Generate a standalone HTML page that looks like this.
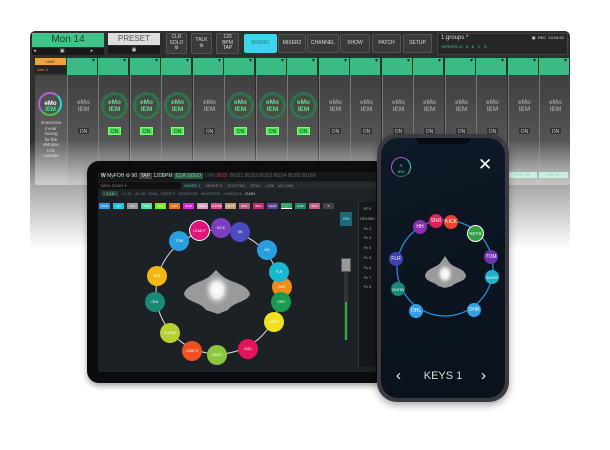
<!DOCTYPE html>
<html><head><meta charset="utf-8"><style>
*{margin:0;padding:0;box-sizing:border-box}
body{width:610px;height:450px;background:#fff;position:relative;overflow:hidden;font-family:"Liberation Sans",sans-serif}
.a{position:absolute}
.btn{position:absolute;background:#3a3a3a;border:1px solid #555;border-radius:2px;color:#ddd;font-size:5px;text-align:center;display:flex;align-items:center;justify-content:center;line-height:1.1}
.st{position:absolute;top:75px;width:31px;height:110px;background:linear-gradient(#3f3f3f,#555 60%,#777);border-left:1px solid #777}
.dd{position:absolute;top:58px;width:30px;height:17px;background:#3cb985;border-left:1px solid #2c6}
.dd:after{content:"▾";position:absolute;right:2px;top:-1px;font-size:6px;color:#123}
.emo{position:absolute;left:0;width:31px;top:24px;text-align:center;font-size:6.5px;line-height:7px;color:#9a9a9a;font-weight:bold}
.emo.g{color:#5fe07a}
.ring{position:absolute;left:4px;top:19px;width:23px;height:23px;border-radius:50%;border:2px solid #2a6a3a;box-shadow:0 0 3px #2d8}
.on{position:absolute;left:9px;top:52px;width:13px;height:8px;background:#333;color:#ccc;font-size:5px;text-align:center;line-height:8px;border:1px solid #555}
.on.g{background:#4ee05a;color:#143;border-color:#7f7}
.b{position:absolute;border-radius:50%;color:#fff;font-size:3.5px;display:flex;align-items:center;justify-content:center}
.c{position:absolute;top:203px;height:6px;width:11px;font-size:3px;color:#fff;text-align:center;line-height:6px}
</style></head><body>
<!-- console -->
<div class="a" style="left:30px;top:31px;width:540px;height:220px;background:#2e2e2e;border-radius:5px 5px 0 0"></div>
<div class="a" style="left:32px;top:33px;width:72px;height:14px;background:#3fc58a;color:#1c3a2c;font-size:10px;text-align:center;line-height:14px">Mon 14</div>
<div class="a" style="left:32px;top:48px;width:72px;height:7px;background:#1a1a1a;color:#ccc;font-size:5px;line-height:7px">&nbsp;◂<span style="margin-left:24px">▣</span><span style="margin-left:26px">▸</span></div>
<div class="a" style="left:108px;top:33px;width:52px;height:12px;background:#ddd;color:#555;font-size:8px;text-align:center;line-height:12px">PRESET</div>
<div class="a" style="left:108px;top:46px;width:52px;height:8px;background:#1a1a1a;color:#ccc;font-size:5px;text-align:center;line-height:8px">▣</div>
<div class="btn" style="left:166px;top:33px;width:21px;height:21px">CLR<br>SOLO<br>⚙</div>
<div class="btn" style="left:191px;top:33px;width:21px;height:21px">TALK<br>⚙</div>
<div class="btn" style="left:216px;top:33px;width:23px;height:21px">120<br>BPM<br>TAP</div>
<div class="btn" style="left:244px;top:34px;width:33px;height:19px;background:#3ed4ec;color:#1a7a8a;border-color:#3ed4ec">MIXER1</div>
<div class="btn" style="left:278px;top:34px;width:28px;height:19px">MIXER2</div>
<div class="btn" style="left:307px;top:34px;width:32px;height:19px">CHANNEL</div>
<div class="btn" style="left:340px;top:34px;width:30px;height:19px">SHOW</div>
<div class="btn" style="left:372px;top:34px;width:29px;height:19px">PATCH</div>
<div class="btn" style="left:403px;top:34px;width:29px;height:19px">SETUP</div>
<div class="a" style="left:437px;top:33px;width:131px;height:22px;background:#262626;border:1px solid #444;color:#ddd;font-size:6px;padding:1px 3px">1:groups *<span style="float:right;font-size:4px">▣ &nbsp;REC &nbsp;14:34:52</span><div style="color:#3c9;font-size:4px;margin-top:3px">SERVER IO &nbsp; A &nbsp; B &nbsp; C &nbsp; D</div></div>
<div class="a" style="left:35px;top:58px;width:31px;height:7px;background:#f0a040;color:#333;font-size:4px;text-align:center;line-height:7px">LINK</div>
<div class="a" style="left:35px;top:66px;width:31px;height:7px;background:#222;color:#f0a040;font-size:4px;line-height:7px;padding-left:2px">Link 3</div>
<div class="a" style="left:35px;top:75px;width:32px;height:110px;background:linear-gradient(#444,#666 70%,#888)"></div>
<div class="a" style="left:38px;top:92px;width:24px;height:24px;border-radius:50%;border:2px solid #a6c;border-right-color:#2dc;border-bottom-color:#4c4"></div>
<div class="a" style="left:37px;top:101px;width:27px;text-align:center;font-size:6px;color:#fff;font-weight:bold;line-height:6px">eMo<br><span style="color:#3e8">IEM</span></div>
<div class="a" style="left:36px;top:120px;width:30px;text-align:center;font-size:4.5px;color:#ddd;line-height:5.5px">Immersive<br>in-ear<br>mixing<br>for the<br>eMotion<br>LV1<br>console</div>

<div class="dd" style="left:67px"></div><div class="st" style="left:67px"><div class="emo">eMo<br>IEM</div><div class="on">ON</div></div>
<div class="dd" style="left:98px"></div><div class="st" style="left:98px"><div class="ring"></div><div class="emo g">eMo<br>IEM</div><div class="on g">ON</div></div>
<div class="dd" style="left:130px"></div><div class="st" style="left:130px"><div class="ring"></div><div class="emo g">eMo<br>IEM</div><div class="on g">ON</div></div>
<div class="dd" style="left:161px"></div><div class="st" style="left:161px"><div class="ring"></div><div class="emo g">eMo<br>IEM</div><div class="on g">ON</div></div>
<div class="dd" style="left:193px"></div><div class="st" style="left:193px"><div class="emo">eMo<br>IEM</div><div class="on">ON</div></div>
<div class="dd" style="left:224px"></div><div class="st" style="left:224px"><div class="ring"></div><div class="emo g">eMo<br>IEM</div><div class="on g">ON</div></div>
<div class="dd" style="left:256px"></div><div class="st" style="left:256px"><div class="ring"></div><div class="emo g">eMo<br>IEM</div><div class="on g">ON</div></div>
<div class="dd" style="left:287px"></div><div class="st" style="left:287px"><div class="ring"></div><div class="emo g">eMo<br>IEM</div><div class="on g">ON</div></div>
<div class="dd" style="left:319px"></div><div class="st" style="left:319px"><div class="emo">eMo<br>IEM</div><div class="on">ON</div></div>
<div class="dd" style="left:350px"></div><div class="st" style="left:350px"><div class="emo">eMo<br>IEM</div><div class="on">ON</div></div>
<div class="dd" style="left:382px"></div><div class="st" style="left:382px"><div class="emo">eMo<br>IEM</div><div class="on">ON</div></div>
<div class="dd" style="left:413px"></div><div class="st" style="left:413px"><div class="emo">eMo<br>IEM</div><div class="on">ON</div></div>
<div class="dd" style="left:445px"></div><div class="st" style="left:445px"><div class="emo">eMo<br>IEM</div><div class="on">ON</div></div>
<div class="dd" style="left:476px"></div><div class="st" style="left:476px"><div class="emo">eMo<br>IEM</div><div class="on">ON</div></div>
<div class="dd" style="left:508px"></div><div class="st" style="left:508px"><div class="emo">eMo<br>IEM</div><div class="on">ON</div></div>
<div class="dd" style="left:539px"></div><div class="st" style="left:539px;width:31px"><div class="emo">eMo<br>IEM</div><div class="on">ON</div></div>
<div class="a" style="left:508px;top:172px;width:29px;height:6px;background:#9de0c0;color:#4a8;font-size:4.5px;text-align:center;line-height:6px">Mon 15</div>
<div class="a" style="left:539px;top:172px;width:29px;height:6px;background:#9de0c0;color:#4a8;font-size:4.5px;text-align:center;line-height:6px">Mon 16</div>
<div class="a" style="left:30px;top:140px;width:545px;height:115px;background:linear-gradient(rgba(255,255,255,0),rgba(255,255,255,.55) 35%,#fff 95%)"></div>

<!-- tablet -->
<div class="a" style="left:87px;top:161px;width:300px;height:222px;background:#0c0c0e;border-radius:12px;box-shadow:0 3px 6px rgba(0,0,0,.35)"></div>
<div class="a" style="left:98px;top:172px;width:278px;height:200px;background:#1c2126"></div>
<div class="a" style="left:98px;top:172px;width:278px;height:9px;background:#15181b;color:#ddd;font-size:5px;line-height:9px;padding-left:3px"><b>W</b> MyFOH ⚙ 90 <span style="background:#444;padding:0 2px">TAP</span> 120BPM <span style="background:#2a5a4a;padding:0 2px;color:#8c8">CLR SOLO</span> <span style="color:#555">LINK</span> <span style="color:#d33">BUS</span> <span style="color:#666">&nbsp;BUS1 BUS2 BUS3 BUS4 BUS5 BUS6</span></div>
<div class="a" style="left:98px;top:182px;width:278px;height:7px;background:#25292e;color:#888;font-size:4px;line-height:7px"><span style="background:#111;display:inline-block;width:83px;padding-left:3px">NEW SONG ▾</span> &nbsp; <span style="color:#3cb">MIXER 1</span> &nbsp;&nbsp;&nbsp; MIXER 2 &nbsp;&nbsp;&nbsp; CUSTOM &nbsp;&nbsp;&nbsp; SPILL &nbsp;&nbsp; LINK &nbsp; NO LINK</div>
<div class="a" style="left:98px;top:190px;width:278px;height:7px;background:#1d2226;color:#777;font-size:4px;line-height:7px;padding-left:4px"><span style="background:#2a4a3a;color:#9c9;padding:0 4px">1-16</span> &nbsp; 17-32 &nbsp; 33-48 &nbsp; RMA &nbsp; GRP/FX &nbsp; MONITOR &nbsp; MASTERS &nbsp; LINK/DCA &nbsp; <span style="color:#ccc">GAIN</span></div>
<div class="c" style="left:99px;background:#2a9fe0">KICK</div><div class="c" style="left:113px;background:#1ac8e0">SN</div><div class="c" style="left:127px;background:#999">HH</div><div class="c" style="left:141px;background:#4ee0a0">TOM</div><div class="c" style="left:155px;background:#7e2">FLR</div><div class="c" style="left:169px;background:#f07020">OHL</div><div class="c" style="left:183px;background:#e020e0">OHR</div><div class="c" style="left:197px;background:#d8a0c0">BASS</div><div class="c" style="left:211px;background:#e05090">GUITAR</div><div class="c" style="left:225px;background:#c0a070">KEYS</div><div class="c" style="left:239px;background:#b06080">BG1</div><div class="c" style="left:253px;background:#c03070">BG2</div><div class="c" style="left:267px;background:#604090">LEAD</div><div class="c" style="left:281px;background:#3a6;border-bottom:1px solid #fff">—</div><div class="c" style="left:295px;background:#1a8a60">AUD</div><div class="c" style="left:309px;background:#c06080">SUP</div><div class="c" style="left:323px;background:#444">X</div>
<div class="a" style="left:340px;top:212px;width:12px;height:14px;background:#1a6a7a;color:#cfe;font-size:4px;text-align:center;line-height:14px">ON</div>
<div class="a" style="left:344px;top:260px;width:4px;height:80px;background:#333"></div>
<div class="a" style="left:345px;top:302px;width:2px;height:38px;background:#3a4"></div>
<div class="a" style="left:341px;top:258px;width:10px;height:14px;background:#999;border:1px solid #555"></div>
<div class="a" style="left:358px;top:202px;width:18px;height:165px;background:#15181b;border-left:1px solid #333;color:#aaa;font-size:4px;line-height:9.8px;padding-top:2px;text-align:center">EFX<br>DRUMS<br>Fx 2<br>Fx 3<br>Fx 4<br>Fx 5<br>Fx 6<br>Fx 7<br>Fx 8</div>
<svg class="a" style="left:98px;top:172px" width="260" height="200">
<defs><radialGradient id="g1"><stop offset="0" stop-color="#fff"/><stop offset=".45" stop-color="#eee"/><stop offset="1" stop-color="#999" stop-opacity="0"/></radialGradient></defs>
<circle cx="120" cy="120" r="62" fill="none" stroke="#ddd" stroke-width="1"/>
<path d="M86,122 C88,112 105,110 112,104 L118,98 L124,104 C131,110 150,112 152,122 C150,130 135,130 130,138 L120,142 L108,138 C103,130 88,130 86,122Z" fill="#9a9a9a"/>
<ellipse cx="119" cy="118" rx="14" ry="17" fill="url(#g1)"/>
</svg>
<div class="b" style="left:189px;top:220px;width:21px;height:21px;background:#e0157a;border:1.5px solid #fff">LEAD F</div>
<div class="b" style="left:211px;top:218px;width:20px;height:20px;background:#7d3fc0">KICK</div>
<div class="b" style="left:230px;top:222px;width:20px;height:20px;background:#4b4bc0">SN</div>
<div class="b" style="left:257px;top:240px;width:20px;height:20px;background:#2a9fe0">HH</div>
<div class="b" style="left:272px;top:277px;width:20px;height:20px;background:#f08a1a">BG2</div>
<div class="b" style="left:269px;top:262px;width:20px;height:20px;background:#1ab8d0">FLR</div>
<div class="b" style="left:271px;top:292px;width:20px;height:20px;background:#1a9a50">OHR</div>
<div class="b" style="left:264px;top:312px;width:20px;height:20px;background:#f0e020">KEYS</div>
<div class="b" style="left:238px;top:339px;width:20px;height:20px;background:#e0155a">AUD</div>
<div class="b" style="left:207px;top:345px;width:20px;height:20px;background:#8cc63f">BASS</div>
<div class="b" style="left:182px;top:341px;width:20px;height:20px;background:#f05020">LEAD R</div>
<div class="b" style="left:160px;top:323px;width:20px;height:20px;background:#b8d030">GUITAR</div>
<div class="b" style="left:145px;top:292px;width:20px;height:20px;background:#1a8a78">OHL</div>
<div class="b" style="left:147px;top:266px;width:20px;height:20px;background:#f0b810">BG1</div>
<div class="b" style="left:169px;top:231px;width:20px;height:20px;background:#2a9fe0">TOM</div>

<!-- phone -->
<div class="a" style="left:377px;top:134px;width:132px;height:268px;background:#3a3b40;border-radius:20px;box-shadow:0 3px 8px rgba(0,0,0,.35)"></div>
<div class="a" style="left:381px;top:138px;width:124px;height:260px;background:linear-gradient(160deg,#0e1a28,#0b1520 50%,#0a121c);border-radius:17px"></div>
<div class="a" style="left:416px;top:138px;width:54px;height:6px;background:#070a0e;border-radius:0 0 6px 6px"></div>
<div class="a" style="left:391px;top:157px;width:20px;height:20px;border-radius:50%;border:1.5px solid #a6c;border-right-color:#2dc;border-bottom-color:#555"></div>
<div class="a" style="left:391px;top:164px;width:20px;text-align:center;color:#fff;font-size:5px;line-height:5px">∩<br><span style="color:#3e8;font-size:4px">IEM</span></div>
<div class="a" style="left:478px;top:156px;color:#fff;font-size:17px;line-height:17px">✕</div>
<svg class="a" style="left:381px;top:200px" width="124" height="140">
<defs><radialGradient id="g2"><stop offset="0" stop-color="#fff"/><stop offset=".45" stop-color="#eee"/><stop offset="1" stop-color="#999" stop-opacity="0"/></radialGradient></defs>
<circle cx="64" cy="68" r="48" fill="none" stroke="#2a8ad0" stroke-width="1.3"/>
<path d="M44,76 C45,68 56,68 60,62 L64,56 L68,62 C72,68 84,68 85,76 C84,82 74,82 71,86 L64,88 L57,86 C54,82 45,82 44,76Z" fill="#9a9a9a"/>
<ellipse cx="64" cy="74" rx="9" ry="11" fill="url(#g2)"/>
</svg>
<div class="b" style="left:413px;top:220px;width:14px;height:14px;background:#8a30b0;font-size:5px">HH</div>
<div class="b" style="left:429px;top:214px;width:14px;height:14px;background:#e0205a;font-size:5px">SNR</div>
<div class="b" style="left:444px;top:215px;width:14px;height:14px;background:#f04030;font-size:5px">KICK</div>
<div class="b" style="left:467px;top:225px;width:17px;height:17px;background:#30a040;border:1.5px solid #fff;font-size:4.5px">KEYS</div>
<div class="b" style="left:484px;top:250px;width:14px;height:14px;background:#7030b0;font-size:5px">TOM</div>
<div class="b" style="left:485px;top:270px;width:14px;height:14px;background:#20b0c8;font-size:4px">BASS</div>
<div class="b" style="left:467px;top:303px;width:14px;height:14px;background:#30a0e8;font-size:5px">OHR</div>
<div class="b" style="left:409px;top:304px;width:14px;height:14px;background:#30a0e8;font-size:5px">OHL</div>
<div class="b" style="left:391px;top:282px;width:14px;height:14px;background:#1a8a78;font-size:4px">GUITA</div>
<div class="b" style="left:389px;top:252px;width:14px;height:14px;background:#4040b0;font-size:5px">FLR</div>
<div class="a" style="left:396px;top:368px;color:#fff;font-size:15px;line-height:16px">‹</div>
<div class="a" style="left:481px;top:368px;color:#fff;font-size:15px;line-height:16px">›</div>
<div class="a" style="left:410px;top:370px;width:66px;text-align:center;color:#ddd;font-size:11px;line-height:13px">KEYS 1</div>
</body></html>
